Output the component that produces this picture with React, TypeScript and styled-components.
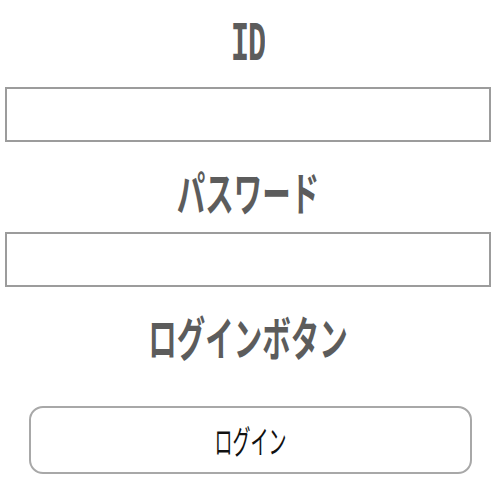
import * as React from 'react';
import styled, { createGlobalStyle } from 'styled-components';

const GlobalStyle = createGlobalStyle`
  body {
    margin: 0;
    background: #ffffff;
    font-family: "Noto Sans CJK JP", "Noto Sans", sans-serif;
  }
`;

type LabelProps = {
    $top?: number,
    $bottom?: number,
    $mono?: boolean,
};

const Page = styled.div`
  display: flex;
  flex-direction: column;
  width: 500px;
  height: 500px;
  padding: 0 9px 0 5px;
  box-sizing: border-box;
`;

const Label = styled.div<LabelProps>`
  display: flex;
  justify-content: center;
  align-items: center;
  height: 44px;
  margin-top: ${p => p.$top ?? 26}px;
  margin-bottom: ${p => p.$bottom ?? 20}px;
  color: #5c5c5c;
  font-family: ${p => p.$mono ? '"Liberation Mono", monospace' : '"Noto Sans CJK JP", sans-serif'};
  font-weight: 700;
  font-size: ${p => p.$mono ? 30 : 28.5}px;
  span {
    display: inline-block;
    transform: scaleY(${p => p.$mono ? 1.85 : 1.62});
    letter-spacing: ${p => p.$mono ? '-1px' : '0'};
  }
`;

const Field = styled.input`
  display: block;
  width: 100%;
  height: 55px;
  box-sizing: border-box;
  border: 2px solid #9c9c9c;
  border-radius: 0;
  background: #fff;
  outline: none;
`;

const ButtonRow = styled.div`
  display: flex;
  padding-left: 24px;
`;

const LoginButton = styled.button`
  width: 443px;
  height: 68px;
  box-sizing: border-box;
  border: 2px solid #a8a8a8;
  border-radius: 14px;
  background: #fff;
  color: #111;
  font-family: "Noto Sans CJK JP", sans-serif;
  font-size: 18px;
  span {
    display: inline-block;
    transform: scaleY(1.8);
  }
`;

export default function App() {
    return (
        <>
            <GlobalStyle />
            <Page>
                <Label $top={23} $mono><span>ID</span></Label>
                <Field type="text" />
                <Label><span>パスワード</span></Label>
                <Field type="password" />
                <Label $bottom={49}><span>ログインボタン</span></Label>
                <ButtonRow>
                    <LoginButton><span>ログイン</span></LoginButton>
                </ButtonRow>
            </Page>
        </>
    );
}
